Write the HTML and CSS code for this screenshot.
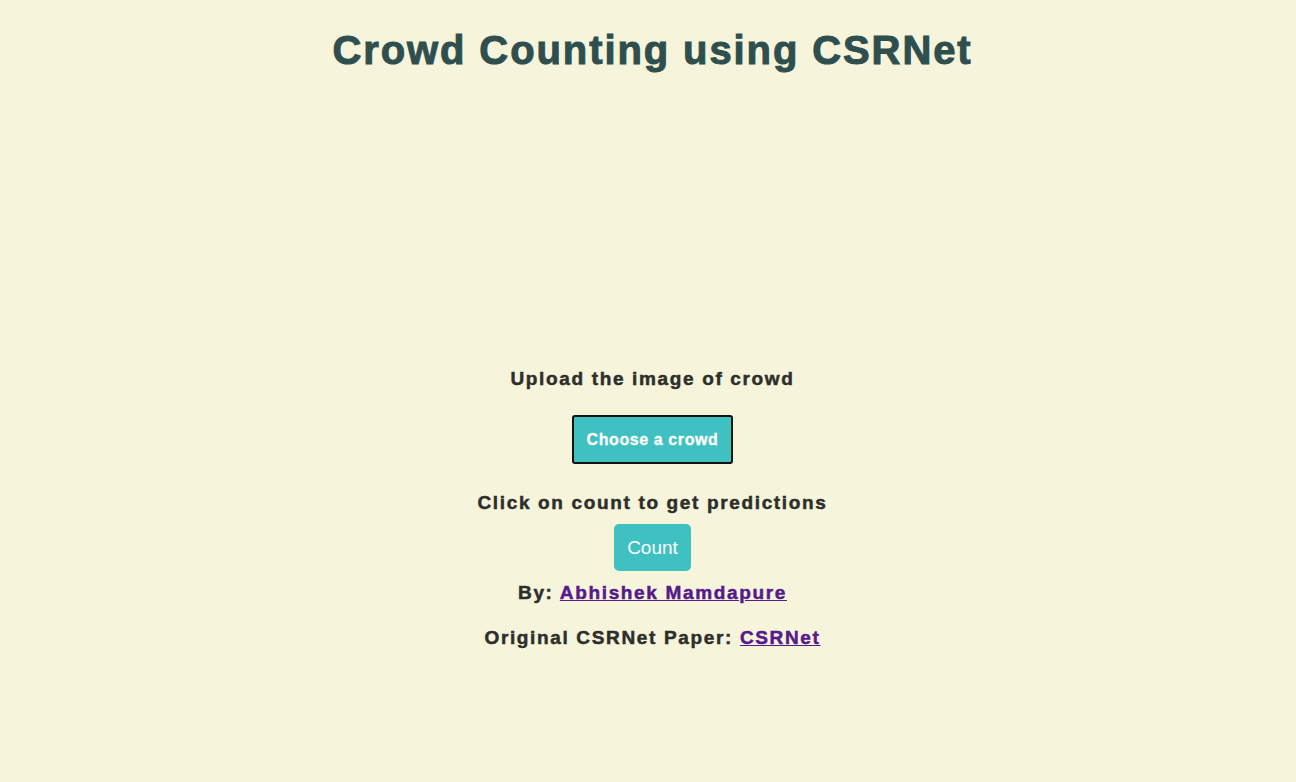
FILE: index.html
```html
<!DOCTYPE html>
<html>
<head>
<meta charset="utf-8">
<title>Crowd Counting using CSRNet</title>
<link rel="stylesheet" href="styles.css">
</head>
<body>
<h1 class="title">Crowd Counting using CSRNet</h1>
<div class="preview"></div>
<main class="content">
  <p class="label">Upload the image of crowd</p>
  <label class="choose">Choose a crowd</label>
  <p class="label">Click on count to get predictions</p>
  <button class="count">Count</button>
  <p class="label">By: <a href="#" class="link">Abhishek Mamdapure</a></p>
  <p class="label label-last">Original CSRNet Paper: <a href="#" class="link">CSRNet</a></p>
</main>
</body>
</html>
```
FILE: styles.css
```css
html, body {
  margin: 0;
  padding: 0;
  background: #f6f5dc;
}
body {
  padding-left: 9px;
  font-family: "Liberation Sans", Arial, sans-serif;
  color: #2e2e2a;
  text-align: center;
}
.title {
  margin: 0;
  padding-top: 26px;
  font-size: 40px;
  line-height: 48px;
  letter-spacing: 1.9px;
  color: #2f4f4f;
  -webkit-text-stroke: 1px #2f4f4f;
}
.preview {
  height: 293px;
}
.content {
  display: flex;
  flex-direction: column;
  align-items: center;
}
.label {
  margin: 0;
  font-size: 19px;
  font-weight: bold;
  letter-spacing: 1.65px;
  line-height: 24px;
  -webkit-text-stroke: 0.5px currentColor;
}
.choose {
  margin-top: 24px;
  margin-bottom: 27px;
  display: inline-block;
  padding: 0 13px;
  height: 45px;
  line-height: 45px;
  border: 2px solid #111;
  border-radius: 3px;
  background: #3fc1c1;
  color: #fff;
  font-size: 16px;
  font-weight: bold;
  letter-spacing: 0.6px;
  -webkit-text-stroke: 0.3px #fff;
}
.count {
  margin-top: 9px;
  margin-bottom: 10px;
  height: 47px;
  padding: 0 13px;
  border: none;
  border-radius: 5px;
  background: #3fc1c1;
  color: #fff;
  font-family: "Liberation Sans", Arial, sans-serif;
  font-size: 19px;
}
.label-last {
  margin-top: 21px;
}
.link {
  color: #551a8b;
  text-decoration: underline;
}
```
